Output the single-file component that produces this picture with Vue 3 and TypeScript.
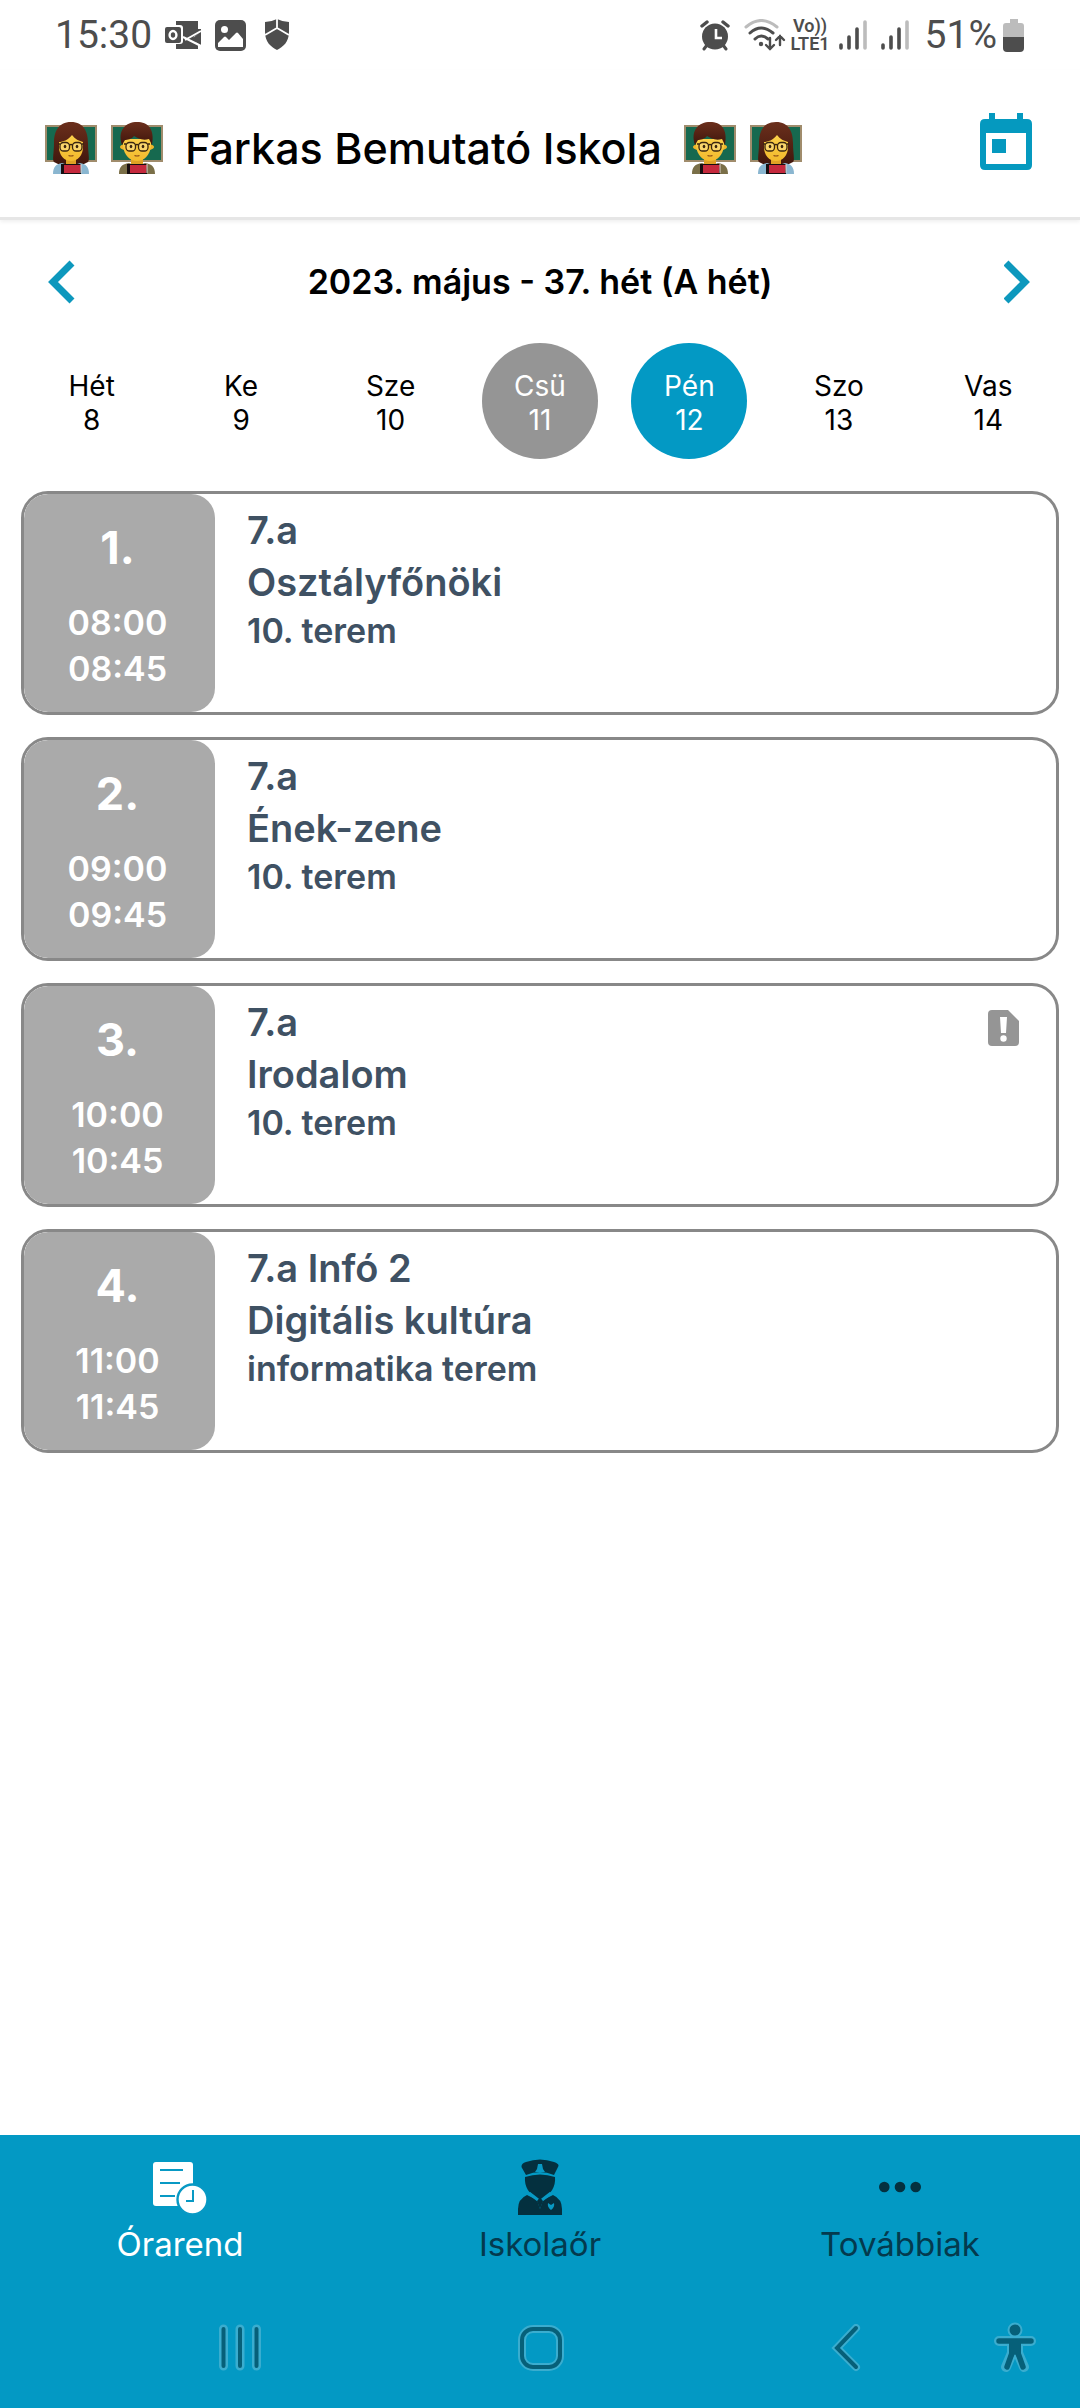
<script setup lang="ts">
import { ref } from 'vue'

interface Day {
  name: string
  date: number
}
interface Lesson {
  number: number
  start: string
  end: string
  group: string
  subject: string
  room: string
  notice?: boolean
}

const days: Day[] = [
  { name: 'Hét', date: 8 },
  { name: 'Ke', date: 9 },
  { name: 'Sze', date: 10 },
  { name: 'Csü', date: 11 },
  { name: 'Pén', date: 12 },
  { name: 'Szo', date: 13 },
  { name: 'Vas', date: 14 },
]
const today = 11
const selected = ref(12)

const lessons: Lesson[] = [
  { number: 1, start: '08:00', end: '08:45', group: '7.a', subject: 'Osztályfőnöki', room: '10. terem' },
  { number: 2, start: '09:00', end: '09:45', group: '7.a', subject: 'Ének-zene', room: '10. terem' },
  { number: 3, start: '10:00', end: '10:45', group: '7.a', subject: 'Irodalom', room: '10. terem', notice: true },
  { number: 4, start: '11:00', end: '11:45', group: '7.a Infó 2', subject: 'Digitális kultúra', room: 'informatika terem' },
]
</script>

<template>
  <div class="app">
    <!-- Shared drawings -->
    <svg class="defs" width="0" height="0" aria-hidden="true">
      <defs>
        <linearGradient id="hair" x1="0" y1="0" x2="0" y2="1">
          <stop offset="0" stop-color="#6b2f1c" />
          <stop offset="1" stop-color="#3f150c" />
        </linearGradient>
        <linearGradient id="skin" x1="0" y1="0" x2="0" y2="1">
          <stop offset="0" stop-color="#fbd04a" />
          <stop offset="1" stop-color="#f2b92c" />
        </linearGradient>
        <symbol id="board" viewBox="0 0 52 52">
          <rect x="0" y="3" width="52" height="37" fill="#a08c6c" />
          <rect x="2" y="5" width="48" height="33" fill="#16694f" />
        </symbol>
        <symbol id="face" viewBox="0 0 52 52">
          <g fill="#fff3c4" stroke="#3a260f" stroke-width="1.3">
            <rect x="15" y="20.500" width="9.500" height="8.500" rx="3.500" fill-opacity=".35" />
            <rect x="27.500" y="20.500" width="9.500" height="8.500" rx="3.500" fill-opacity=".35" />
            <path d="M24.500 23q1.500-1 3 0M13 22h2M37 22h2" fill="none" />
          </g>
          <ellipse cx="20" cy="24.500" rx="1.300" ry="1.800" fill="#3a260f" />
          <ellipse cx="32" cy="24.500" rx="1.300" ry="1.800" fill="#3a260f" />
          <path d="M23.500 33.500q2.500 1 5 0" stroke="#8b4d17" stroke-width="1.200" fill="none" />
          <path d="M16 42h20v10H16z" fill="#160e10" />
          <path d="M19 43h17l-1 8H19z" fill="#c5293d" />
          <path d="M36 42v9" stroke="#ddd5cf" stroke-width="1" />
        </symbol>
        <symbol id="teacher-woman" viewBox="0 0 52 52">
          <use href="#board" />
          <path d="M26 0C13 0 9 10 9 21c0 10-2 17 0 19l8 4h18l8-4c2-2 0-9 0-19C43 10 39 0 26 0z" fill="url(#hair)" />
          <path d="M8 52c0-7 3-10 9-11l9 3 9-3c6 1 9 4 9 11z" fill="#8ab6d0" />
          <path d="M21 36h10v6q-5 3-10 0z" fill="#dfa125" />
          <path d="M14 20c4 0 9-2 13-7 3 4 7 6 11 7v5c0 8-5 14-12 14s-12-6-12-14z" fill="url(#skin)" />
          <use href="#face" />
        </symbol>
        <symbol id="teacher-man" viewBox="0 0 52 52">
          <use href="#board" />
          <path d="M8 52c0-7 3-10 10-11l8 3 8-3c7 1 10 4 10 11z" fill="#7a6f48" />
          <path d="M20 36h12v6q-6 3-12 0z" fill="#dfa125" />
          <ellipse cx="26" cy="25" rx="17" ry="4.500" fill="#eeb42a" />
          <path d="M12 17h28v7c-1 9-7 15-14 15s-13-6-14-15z" fill="url(#skin)" />
          <path d="M11 23C6 8 15 0 26 0S44 7 41 23l-3-6c-7 2-11-1-15-3-2 3-7 4-9 4z" fill="url(#hair)" />
          <use href="#face" />
        </symbol>
        <symbol id="signal" viewBox="0 0 28 30">
          <g stroke-width="3.600" stroke-linecap="round" stroke="#4d4d4d">
            <path d="M2 28v-3M10 28V17M18 28V9" />
            <path d="M26 28V2" stroke="#bcbcbc" />
          </g>
        </symbol>
      </defs>
    </svg>

    <div class="status">
      <span class="clock">15:30</span>
      <svg class="outlook" width="38" height="30" viewBox="0 0 38 30">
        <path d="M11 1h22v8h3v3L11 29z" fill="#4d4d4d" />
        <path d="M11 25h22v4H11z" fill="#4d4d4d" />
        <path d="M14 16h14l5 9v2H14z" fill="#4d4d4d" />
        <path d="M36 11v15l-9-7z" fill="#4d4d4d" />
        <path d="M18 17l18 9M20 20l16-9" stroke="#fff" stroke-width="2" fill="none" />
        <rect x="-1" y="5" width="19" height="19" rx="3" fill="#fff" />
        <rect x="0" y="7" width="16" height="16" rx="2" fill="#4d4d4d" />
        <ellipse cx="8" cy="15" rx="3.400" ry="4" fill="none" stroke="#fff" stroke-width="2.400" />
      </svg>
      <svg class="gallery" width="31" height="31" viewBox="0 0 31 31">
        <rect width="31" height="31" rx="5" fill="#4d4d4d" />
        <circle cx="9.500" cy="9.500" r="3.500" fill="#fff" />
        <path d="M3 27v-4l6-6q1-1 2 0l3 3 7-7q1-1 2 0l5 6v8z" fill="#fff" />
      </svg>
      <svg class="shield" width="26" height="32" viewBox="0 0 26 32">
        <path d="M13 0q6 3 12 3v10c0 10-6 15-12 18C7 28 1 23 1 13V3q6 0 12-3z" fill="#4d4d4d" />
        <path d="M13 0v9M13 9L1 16M13 9l12 7" stroke="#fff" stroke-width="1.800" />
      </svg>

      <svg class="alarm" width="30" height="31" viewBox="0 0 30 31">
        <g stroke="#4d4d4d" stroke-linecap="round">
          <path d="M2 6l5-4M28 6l-5-4" stroke-width="3.400" />
          <path d="M7 25l-3 4M23 25l3 4" stroke-width="3" />
        </g>
        <circle cx="15" cy="16.500" r="13" fill="#4d4d4d" />
        <path d="M16 9v9h6" stroke="#fff" stroke-width="2.600" fill="none" />
      </svg>
      <svg class="wifi" width="42" height="32" viewBox="0 0 42 32" fill="none" stroke-linecap="round">
        <path d="M2 8q15-13 31 0" stroke="#bcbcbc" stroke-width="3" />
        <g stroke="#4d4d4d">
          <path d="M6 14q11-10 23 0M11 20q6-6 13 0" stroke-width="3" />
          <path d="M26 19v11M22 26l4 4 4-4M36 26V17M32 21l4-4 4 4" stroke-width="2.400" />
        </g>
        <circle cx="17" cy="25" r="2.200" fill="#4d4d4d" />
      </svg>
      <span class="volte"><span>Vo))</span><span>LTE1</span></span>
      <svg class="signal" width="28" height="30"><use href="#signal" /></svg>
      <svg class="signal second" width="28" height="30"><use href="#signal" /></svg>
      <span class="percent">51%</span>
      <svg class="battery" width="22" height="33" viewBox="0 0 22 33">
        <path d="M7 0h8v4h3q3 0 3 3v12H0V7q0-3 3-3h4z" fill="#bcbcbc" />
        <path d="M0 18h21v11q0 4-4 4H4q-4 0-4-4z" fill="#4d4d4d" />
      </svg>
    </div>

    <header class="header">
      <div class="school">
        <svg width="52" height="52"><use href="#teacher-woman" /></svg>
        <svg width="52" height="52"><use href="#teacher-man" /></svg>
        <h1>Farkas Bemutató Iskola</h1>
        <svg width="52" height="52"><use href="#teacher-man" /></svg>
        <svg width="52" height="52"><use href="#teacher-woman" /></svg>
      </div>
      <button class="today" type="button" aria-label="Ugrás a mai napra">
        <svg width="52" height="57" viewBox="0 0 52 57">
          <path fill-rule="evenodd" fill="#0599bf" d="M9 0h6v6h22V0h6v6h4q5 0 5 5v41q0 5-5 5H5q-5 0-5-5V11q0-5 5-5h4zM6 20v31h40V20z" />
          <rect x="12" y="26" width="14" height="14" fill="#0599bf" />
        </svg>
      </button>
    </header>

    <main class="content">
      <div class="week">
        <button type="button" aria-label="Előző hét">
          <svg width="28" height="44" viewBox="0 0 28 44"><path d="M24 3L5 22l19 19" fill="none" stroke="#0d98bd" stroke-width="7" /></svg>
        </button>
        <h2>2023. május - 37. hét (A hét)</h2>
        <button type="button" aria-label="Következő hét">
          <svg width="28" height="44" viewBox="0 0 28 44"><path d="M2 3l19 19L2 41" fill="none" stroke="#0d98bd" stroke-width="7" /></svg>
        </button>
      </div>

      <nav class="days" aria-label="Napok">
        <button
          v-for="day in days"
          :key="day.date"
          type="button"
          class="day"
          :class="{ current: day.date === today, selected: day.date === selected }"
          @click="selected = day.date"
        >
          <span>{{ day.name }}</span>
          <span>{{ day.date }}</span>
        </button>
      </nav>

      <section class="lessons">
        <article v-for="lesson in lessons" :key="lesson.number" class="lesson">
          <div class="slot">
            <strong>{{ lesson.number }}.</strong>
            <time>{{ lesson.start }}</time>
            <time>{{ lesson.end }}</time>
          </div>
          <div class="info">
            <p>{{ lesson.group }}</p>
            <p>{{ lesson.subject }}</p>
            <p class="room">{{ lesson.room }}</p>
          </div>
          <svg v-if="lesson.notice" class="notice" width="31" height="36" viewBox="0 0 31 36">
            <path d="M4 0h16l11 11v21q0 4-4 4H4q-4 0-4-4V4q0-4 4-4z" fill="#959595" />
            <path d="M12 7h7l-1 16h-5z" fill="#fff" />
            <circle cx="15.500" cy="28.500" r="3.200" fill="#fff" />
          </svg>
        </article>
      </section>
    </main>

    <footer class="footer">
      <nav class="tabs" aria-label="Főmenü">
        <a href="#orarend" class="active">
          <svg width="54" height="56" viewBox="0 0 54 56">
            <rect x="0" y="3" width="40" height="44" rx="3" fill="#fff" />
            <path d="M7 11h23M7 24h20M7 37h15" stroke="#0899c4" stroke-width="2.200" />
            <circle cx="39.500" cy="40.500" r="15" fill="#fff" stroke="#0899c4" stroke-width="2.400" />
            <path d="M40 31v11h-7" stroke="#0899c4" stroke-width="2" fill="none" />
          </svg>
          <span>Órarend</span>
        </a>
        <a href="#iskolaor">
          <svg width="46" height="56" viewBox="0 0 46 56" fill="#04303f">
            <path d="M5 9Q3 5 9 3q14-5 28 0 6 2 4 5l-4 8q-14-6-28 0z" />
            <path d="M21 5h4l1 5 2 3H18l2-3z" fill="#0899c4" />
            <path d="M8 18q15-5 30 0c1 10-5 17-10 20l-5 4-5-4C13 35 7 28 8 18z" />
            <path d="M10 36l10 5 3 9 3-9 10-5q9 4 9 14v6H1v-6q0-10 9-14z" />
            <path d="M12 34l9 7M34 34l-9 7" stroke="#0899c4" stroke-width="3" />
            <path d="M20 42l3-3 3 3-3 8z" />
            <path d="M31 44l3 2 3-2q1 4-3 7-4-3-3-7z" fill="#0899c4" />
          </svg>
          <span>Iskolaőr</span>
        </a>
        <a href="#tovabbiak">
          <svg width="42" height="56" viewBox="0 0 42 56" fill="#04303f">
            <circle cx="5.300" cy="28" r="5.300" />
            <circle cx="21" cy="28" r="5.300" />
            <circle cx="36.700" cy="28" r="5.300" />
          </svg>
          <span>Továbbiak</span>
        </a>
      </nav>

      <div class="system">
        <button type="button" aria-label="Legutóbbiak">
          <svg width="46" height="48" viewBox="0 0 46 48" stroke-linecap="round">
            <path d="M6.500 5v37M23 5v37M39.500 5v37" stroke="#3aadcf" stroke-width="9" />
            <path d="M6.500 5v37M23 5v37M39.500 5v37" stroke="#066079" stroke-width="4" />
          </svg>
        </button>
        <button type="button" aria-label="Kezdőlap">
          <svg width="46" height="48" viewBox="0 0 46 48" fill="none">
            <rect x="4" y="5" width="38" height="38" rx="11" stroke="#3aadcf" stroke-width="8" />
            <rect x="4" y="5" width="38" height="38" rx="11" stroke="#066079" stroke-width="4" />
          </svg>
        </button>
        <button type="button" aria-label="Vissza">
          <svg width="46" height="48" viewBox="0 0 46 48" fill="none" stroke-linecap="round">
            <path d="M37 4L18 24l19 19" stroke="#3aadcf" stroke-width="8" />
            <path d="M37 4L18 24l19 19" stroke="#066079" stroke-width="4" />
          </svg>
        </button>
        <button type="button" aria-label="Kisegítő lehetőségek">
          <svg width="46" height="52" viewBox="0 0 46 52" stroke-linejoin="round" stroke-linecap="round">
            <g stroke="#3aadcf" fill="#3aadcf">
              <circle cx="23" cy="8" r="5" stroke-width="5" />
              <path d="M7 19h32M20 21h6v10l6 14M20 21v10l-6 14" stroke-width="10" fill="none" />
            </g>
            <circle cx="23" cy="8" r="5.500" fill="#066079" />
            <path d="M7 19h32M15 45l5-14M31 45l-5-14" stroke="#066079" stroke-width="5.500" fill="none" />
            <path d="M17 19h12v13l-3 3h-1l-2-3-2 3h-1l-3-3z" fill="#066079" />
          </svg>
        </button>
      </div>
    </footer>
  </div>
</template>

<style>
body {
  margin: 0;
  background: #fff;
}
</style>

<style scoped>
.app {
  display: flex;
  flex-direction: column;
  min-height: 100vh;
  color: #000;
  background: #fff;
  font-family: Inter, 'Liberation Sans', sans-serif;
}
.defs {
  position: absolute;
}
svg {
  display: block;
  flex: none;
}
h1,
h2,
p {
  margin: 0;
}
button {
  padding: 0;
  border: 0;
  background: none;
  color: inherit;
  font: inherit;
  cursor: pointer;
}

.status {
  display: flex;
  align-items: center;
  height: 70px;
  padding: 0 55px;
  color: #4d4d4d;
  font-family: Roboto, sans-serif;
  font-size: 39px;
}
.outlook {
  margin-left: 13px;
}
.gallery {
  margin-left: 12px;
}
.shield {
  margin-left: 18px;
}
.alarm {
  margin-left: auto;
}
.wifi {
  margin-left: 14px;
}
.volte {
  display: flex;
  flex-direction: column;
  align-items: center;
  margin-left: 4px;
  font-size: 18px;
  font-weight: 600;
  line-height: 18px;
}
.signal {
  margin-left: 9px;
}
.second {
  margin-left: 14px;
}
.percent {
  margin-left: 16px;
}
.battery {
  margin-left: 6px;
}

.header {
  display: flex;
  align-items: center;
  justify-content: space-between;
  height: 150px;
  padding: 0 48px 4px 45px;
  border-bottom: 3px solid #e6e6e6;
  box-shadow: 0 2px 4px #f0f0f0;
  box-sizing: border-box;
}
.school {
  display: flex;
  align-items: center;
  gap: 14px;
  padding-top: 12px;
}
.school h1 {
  margin: 0 8px;
  font-size: 43px;
  font-weight: 500;
  line-height: 54px;
  white-space: nowrap;
}

.content {
  flex: 1;
}
.week {
  display: flex;
  align-items: center;
  justify-content: space-between;
  height: 123px;
  padding: 0 48px;
}
.week h2 {
  font-size: 34px;
  font-weight: 600;
  line-height: 40px;
}

.days {
  display: grid;
  grid-template-columns: repeat(7, 1fr);
  justify-items: center;
  padding: 0 17px;
}
.day {
  display: flex;
  flex-direction: column;
  align-items: center;
  justify-content: center;
  width: 116px;
  height: 116px;
  padding-top: 4px;
  border-radius: 50%;
  box-sizing: border-box;
  font-size: 28px;
  line-height: 34px;
}
.current {
  color: #fff;
  background: #959595;
}
.selected {
  color: #fff;
  background: #0399c4;
}

.lessons {
  display: flex;
  flex-direction: column;
  gap: 22px;
  padding: 32px 21px;
}
.lesson {
  display: flex;
  align-items: flex-start;
  min-height: 224px;
  border: 3px solid #888;
  border-radius: 27px;
  box-sizing: border-box;
  overflow: hidden;
}
.slot {
  display: flex;
  flex-direction: column;
  align-items: center;
  align-self: stretch;
  width: 191px;
  padding: 27px 4px 0 0;
  border-radius: 24px;
  box-sizing: border-box;
  color: #fff;
  background: #aaa;
  font-size: 34px;
  font-weight: 600;
  line-height: 46px;
}
.slot strong {
  margin-bottom: 25px;
  font-size: 45px;
  font-weight: 700;
  line-height: 54px;
}
.info {
  flex: 1;
  padding: 10px 0 0 32px;
  color: #3f5163;
  font-size: 38px;
  font-weight: 600;
  line-height: 52px;
}
.info .room {
  font-size: 34px;
  line-height: 46px;
}
.notice {
  margin: 24px 37px 0 0;
}

.footer {
  color: #043a4e;
  background: #0399c4;
}
.tabs {
  display: grid;
  grid-template-columns: repeat(3, 1fr);
  height: 154px;
}
.tabs a {
  display: flex;
  flex-direction: column;
  align-items: center;
  padding-top: 24px;
  color: inherit;
  font-size: 33px;
  line-height: 38px;
  text-decoration: none;
}
.tabs span {
  margin-top: 10px;
}
.tabs .active {
  color: #fff;
}
.system {
  display: grid;
  grid-template-columns: repeat(3, 1fr) 46px;
  align-items: center;
  justify-items: center;
  height: 117px;
  padding: 0 42px 2px 90px;
}
</style>
